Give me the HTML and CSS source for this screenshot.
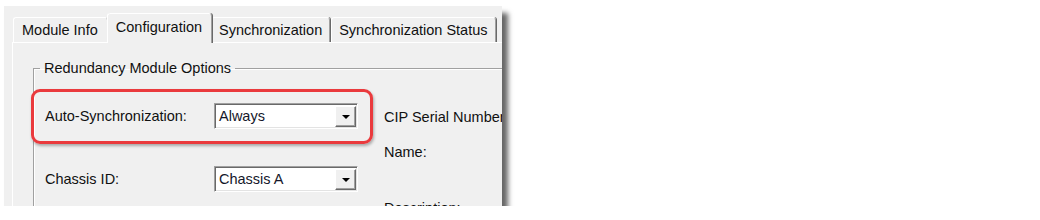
FILE: index.html
```html
<!DOCTYPE html>
<html lang="en">
<head>
    <meta charset="UTF-8">
    <title>Module Properties - Configuration</title>
    <link rel="stylesheet" href="styles.css">
</head>
<body>
    <div class="window">
        <div class="tabs">
            <div class="tab first">Module Info</div>
            <div class="tab active">Configuration</div>
            <div class="tab">Synchronization</div>
            <div class="tab">Synchronization Status</div>
        </div>

        <div class="page">
            <fieldset class="group">
                <legend>Redundancy Module Options</legend>
                <div class="group-body">
                    <div class="fields">
                        <!-- highlighted row -->
                        <div class="field marked">
                            <label>Auto-Synchronization:</label>
                            <div class="combo">
                                <span class="combo-value">Always</span>
                                <span class="combo-btn"><i class="arrow"></i></span>
                            </div>
                        </div>
                        <div class="field">
                            <label>Chassis ID:</label>
                            <div class="combo">
                                <span class="combo-value">Chassis A</span>
                                <span class="combo-btn"><i class="arrow"></i></span>
                            </div>
                        </div>
                    </div>

                    <div class="info">
                        <div class="info-line">CIP Serial Number:</div>
                        <div class="info-line name">Name:</div>
                        <div class="info-line desc">Description:</div>
                    </div>
                </div>
            </fieldset>
        </div>
    </div>
</body>
</html>
```

FILE: styles.css
```css
body {
    margin: 0;
    background: #fff;
    font-family: 'Liberation Sans', Arial, sans-serif;
    font-size: 14.5px;
    color: #111;
}

.window {
    margin: 6px 0 0 4px;
    width: 498px;
    height: 200px;
    background: #f0f0f0;
    overflow: hidden;
    box-shadow: 6px 7px 5px rgba(0,0,0,0.6);
}

/* tab strip */
.tabs {
    display: flex;
    align-items: flex-end;
    height: 36px;
    padding-left: 9px;
}

.tab {
    height: 24px;
    line-height: 24px;
    padding: 0 7px;
    white-space: nowrap;
    border-top: 1px solid #fff;
    border-left: 1px solid #fff;
    border-right: 1px solid #a0a0a0;
    box-shadow: 1px 0 0 #696969;
    border-radius: 3px 3px 0 0;
    margin-right: 1px;
}

.tab.first {
    padding: 0 9px 0 8px;
}

.tab.active {
    position: relative;
    z-index: 1;
    height: 29px;
    line-height: 26px;
    margin: 0 -1px -1px -2px;
    padding: 0 9px 0 8px;
    background: #f0f0f0;
}

.page {
    margin-left: 8px;
    width: 600px;
    height: 170px;
    border-top: 1px solid #fff;
    border-left: 1px solid #fff;
}

/* group box */
.group {
    margin: 17px 0 0 20px;
    padding: 0;
    border: 1px solid #a0a0a0;
    box-shadow: inset 1px 1px 0 #fff, 1px 1px 0 #fff;
    height: 200px;
}

.group legend {
    margin-left: 6px;
    padding: 0 4px;
    line-height: 16px;
}

.group-body {
    display: flex;
    padding: 27px 0 0 11px;
}

.fields {
    display: flex;
    flex-direction: column;
    gap: 37px;
}

.field {
    position: relative;
    display: flex;
    align-items: center;
}

.field label {
    width: 169px;
}

/* red annotation frame */
.field.marked::after {
    content: "";
    position: absolute;
    top: -14px;
    left: -14px;
    right: -15px;
    bottom: -15px;
    border: 3px solid #ea3a3d;
    border-radius: 9px;
    box-shadow: 1px 2px 3px rgba(0,0,0,0.3);
    pointer-events: none;
}

.combo {
    display: flex;
    width: 144px;
    height: 26px;
    box-sizing: border-box;
    background: #fff;
    border: 1px solid;
    border-color: #a0a0a0 #fff #fff #a0a0a0;
    box-shadow: inset 1px 1px 0 #696969, inset -1px -1px 0 #e3e3e3;
    padding: 1px 1px 1px 4px;
}

.combo-value {
    flex: 1;
    line-height: 23px;
    color: #15172a;
}

.combo-btn {
    display: flex;
    justify-content: center;
    align-items: center;
    width: 21px;
    margin-top: 1px;
    box-sizing: border-box;
    background: #f0f0f0;
    border: 1px solid;
    border-color: #fff #696969 #696969 #fff;
    box-shadow: inset -1px -1px 0 #a0a0a0;
}

.arrow {
    width: 0;
    height: 0;
    border-left: 4px solid transparent;
    border-right: 4px solid transparent;
    border-top: 4px solid #000;
}

.info {
    margin-left: 26px;
    white-space: nowrap;
}

.info-line {
    line-height: 20px;
    margin-top: 4px;
}

.info-line.name {
    margin-top: 15px;
}

.info-line.desc {
    margin-top: 36px;
}
```
